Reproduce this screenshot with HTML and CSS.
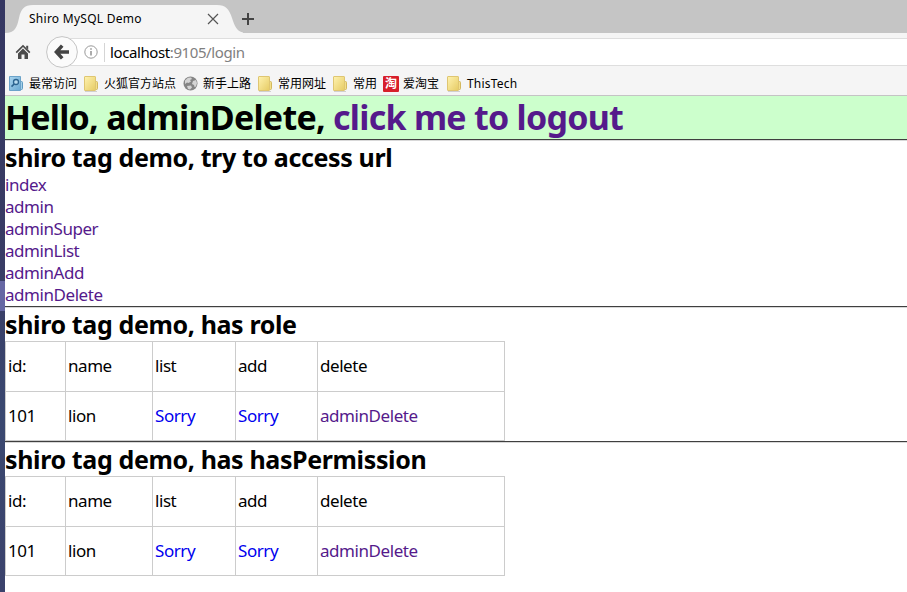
FILE: index.html
```html
<!DOCTYPE html>
<html lang="zh-CN">
<head>
<meta charset="utf-8">
<title>Shiro MySQL Demo</title>
<link rel="stylesheet" href="styles.css">
</head>
<body>
<svg class="defs" aria-hidden="true">
  <defs>
    <linearGradient id="gold" x1="0" y1="0" x2="1" y2="1"><stop offset="0" stop-color="#fff3b0"/><stop offset="1" stop-color="#e6cb64"/></linearGradient>
    <linearGradient id="blue" x1="0" y1="0" x2="1" y2="1"><stop offset="0" stop-color="#a9d4ee"/><stop offset="1" stop-color="#6ba9d3"/></linearGradient>
    <symbol id="folder" viewBox="0 0 16 16">
      <rect x="9.5" y="5.500" width="4" height="8" rx="1" fill="#f3df88" stroke="#d3b85e"/>
      <rect x=".5" y=".5" width="11" height="14" rx=".5" fill="url(#gold)" stroke="#dfc672"/>
      <path d="M1 15.500h12" stroke="#d0d0d0"/>
    </symbol>
  </defs>
</svg>
<div class="desktop"><i class="desktop-band"></i></div>
<div class="window">
  <div class="tabs">
    <svg class="tab-shape" viewBox="0 0 238 34"><path d="M0 33C10 33 12 27 14 18C16 9 19 5 28 5H212C221 5 224 9 227 18C230 27 232 33 242 33V34H0z" fill="#f5f5f5"/></svg>
    <span class="tab-title">Shiro MySQL Demo</span>
    <svg class="close" viewBox="0 0 12 12"><path d="M1 1L11 11M11 1L1 11" stroke="#555" stroke-width="1.2"/></svg>
    <svg class="plus" viewBox="0 0 12 12"><path d="M6 0V12M0 6H12" stroke="#444" stroke-width="2"/></svg>
  </div>
  <div class="nav">
    <svg class="home" viewBox="0 0 16 16"><path d="M8 .7L15.4 8.1L14.2 9.2L8 3.1L1.8 9.2L.6 8.1z" fill="#4b4b4b"/><path d="M11.2 1.8h2v4l-2-2zM8 4.5L13 9.4V15H9.5V10.5H6.5V15H3V9.4z" fill="#4b4b4b"/></svg>
    <div class="address">
      <svg class="back" viewBox="0 0 32 32"><circle cx="16" cy="16" r="15.4" fill="#fbfbfb" stroke="#c4c4c4"/><path d="M16.2 9.6L10.4 16L16.2 22.4M11 16H23" fill="none" stroke="#444" stroke-width="3.5"/></svg>
      <svg class="info" viewBox="0 0 14 14"><circle cx="7" cy="7" r="6.2" fill="none" stroke="#999"/><path d="M7 6V10.5M7 3.2V4.7" stroke="#909090" stroke-width="1.5"/></svg>
      <span class="separator"></span>
      <span class="url"><span class="host">localhost</span>:9105/login</span>
    </div>
  </div>
  <div class="bookmarks">
    <span class="bm bm1"><svg viewBox="0 0 16 16"><rect x="9.500" y="5.500" width="4" height="8" rx="1" fill="#a5d1ea" stroke="#5e9ac2"/><path d="M.5 .5h11v14H.5z" fill="url(#blue)" stroke="#6ba3c9"/><circle cx="7" cy="6" r="2.500" fill="#b9dcf0" stroke="#2c638f" stroke-width="1.300"/><path d="M5.200 8L2.500 10.700" stroke="#2c638f" stroke-width="1.700"/></svg>最常访问</span>
    <span class="bm bm2"><svg><use href="#folder"/></svg>火狐官方站点</span>
    <span class="bm bm3"><svg viewBox="0 0 16 16"><circle cx="7.500" cy="7.500" r="7" fill="#858585"/><path d="M2 4.500L5 1.800L8 1.600L9 3L7 4L8 5.500L5.500 7L4 6.500L2 8zM10 5L13 4L14 7L13 10.500L11.500 11L11 9L9 8zM4 10L8 9.500L9 11.500L7 13.500L5 13z" fill="#d4d4d4"/></svg>新手上路</span>
    <span class="bm bm4"><svg><use href="#folder"/></svg>常用网址</span>
    <span class="bm bm5"><svg><use href="#folder"/></svg>常用</span>
    <span class="bm bm6"><b class="taobao">淘</b>爱淘宝</span>
    <span class="bm bm7"><svg><use href="#folder"/></svg>ThisTech</span>
  </div>
  <main>
    <h1>Hello, adminDelete, <a href="#">click me to logout</a></h1>
    <hr>
    <h2>shiro tag demo, try to access url</h2>
    <ul>
      <li><a href="#">index</a></li>
      <li><a href="#">admin</a></li>
      <li><a href="#">adminSuper</a></li>
      <li><a href="#">adminList</a></li>
      <li><a href="#">adminAdd</a></li>
      <li><a href="#">adminDelete</a></li>
    </ul>
    <hr>
    <h2>shiro tag demo, has role</h2>
    <table>
      <colgroup><col class="c1"><col class="c2"><col class="c3"><col class="c4"><col class="c5"></colgroup>
      <tr><td>id:</td><td>name</td><td>list</td><td>add</td><td>delete</td></tr>
      <tr class="r2"><td>101</td><td>lion</td><td class="sorry">Sorry</td><td class="sorry">Sorry</td><td><a href="#">adminDelete</a></td></tr>
    </table>
    <hr>
    <h2>shiro tag demo, has hasPermission</h2>
    <table>
      <colgroup><col class="c1"><col class="c2"><col class="c3"><col class="c4"><col class="c5"></colgroup>
      <tr><td>id:</td><td>name</td><td>list</td><td>add</td><td>delete</td></tr>
      <tr class="r2"><td>101</td><td>lion</td><td class="sorry">Sorry</td><td class="sorry">Sorry</td><td><a href="#">adminDelete</a></td></tr>
    </table>
  </main>
</div>
</body>
</html>
```
FILE: styles.css
```css
* { box-sizing: border-box; }
body { margin: 0; width: 907px; height: 592px; display: flex; overflow: hidden; background: #fff; color: #000; font-family: "Noto Sans", "Noto Sans CJK SC", sans-serif; }
svg { display: block; flex: none; }
.defs { position: absolute; width: 0; height: 0; }
.desktop { width: 5px; height: 592px; flex: none; padding-top: 281px; background: linear-gradient(#343661, #393c65 45%, #3a4870 70%, #3b426c); }
.desktop-band { display: block; height: 30px; background: #6667a4; }
.window { flex: 1; min-width: 0; }

.tabs { height: 33px; background: #c5c5c5; display: flex; align-items: center; position: relative; padding: 5px 0 0 24px; }
.tab-shape { position: absolute; left: 0; top: 0; width: 238px; height: 34px; }
.tab-title { position: relative; width: 178px; font-size: 12px; line-height: 17px; letter-spacing: .26px; white-space: nowrap; padding-bottom: 1px; }
.close { position: relative; width: 12px; height: 12px; }
.plus { width: 12px; height: 12px; margin-left: 23px; }

.nav { position: relative; height: 38px; padding: 3px 0 0 10px; background: #f5f5f5; display: flex; }
.home { width: 16px; height: 16px; margin-top: 8px; }
.address { flex: 1; margin: 2px 0 0 31px; border: 1px solid #dedede; border-width: 1px 0; background: #fff; display: flex; align-items: center; height: 28px; }
.back { width: 32px; height: 32px; margin-left: -16px; }
.info { width: 14px; height: 14px; margin-left: 6px; }
.separator { width: 1px; height: 19px; margin: 0 5px 0 6px; background: #d5d5d5; }
.url { font-size: 15px; letter-spacing: -.4px; color: #808080; white-space: nowrap; }
.host { color: #000; }

.bookmarks { height: 25px; background: #f5f5f5; border-bottom: 1px solid #c4c4c4; display: flex; font-size: 12px; line-height: 24px; padding: 1px 0 0 4px; }
.bm { display: flex; align-items: center; gap: 4px; white-space: nowrap; flex: none; height: 24px; }
.bm svg { width: 16px; height: 16px; margin-bottom: 1px; }
.bm1 { width: 75px; }
.bm2 { width: 99px; }
.bm3 { width: 75px; }
.bm4 { width: 75px; }
.bm5 { width: 50px; }
.bm6 { width: 64px; gap: 4px; }
.bm7 { letter-spacing: .2px; }
.taobao { width: 16px; height: 16px; margin-bottom: 1px; border-radius: 1px; background: #d71f2b; color: #fff; font-size: 12px; line-height: 15px; text-align: center; }

a { color: #551a8b; text-decoration: none; }
hr { margin: 0; height: 2px; border: 0; border-top: 1px solid #3f3f3f; background: #d8d8d8; }
h1 { margin: 0; height: 43px; background: #ccffcc; font-size: 34px; line-height: 43px; letter-spacing: -.74px; white-space: nowrap; }
h2 { margin: 0; height: 33px; font-size: 25px; line-height: 33px; letter-spacing: -.37px; white-space: nowrap; }
ul { margin: 0; padding: 0; list-style: none; height: 132px; }
li { height: 22px; line-height: 22px; font-size: 17px; letter-spacing: -.45px; }
table { width: 500px; table-layout: fixed; border-collapse: collapse; font-size: 17px; letter-spacing: -.44px; }
td { height: 50px; padding: 0 2px 2px; border: 1px solid #ccc; line-height: 22px; }
.r2 td { height: 49px; padding-bottom: 0; }
.sorry { color: #0000ee; }
.c1 { width: 60px; }
.c2 { width: 87px; }
.c3 { width: 83px; }
.c4 { width: 82px; }
.c5 { width: 187px; }
```
